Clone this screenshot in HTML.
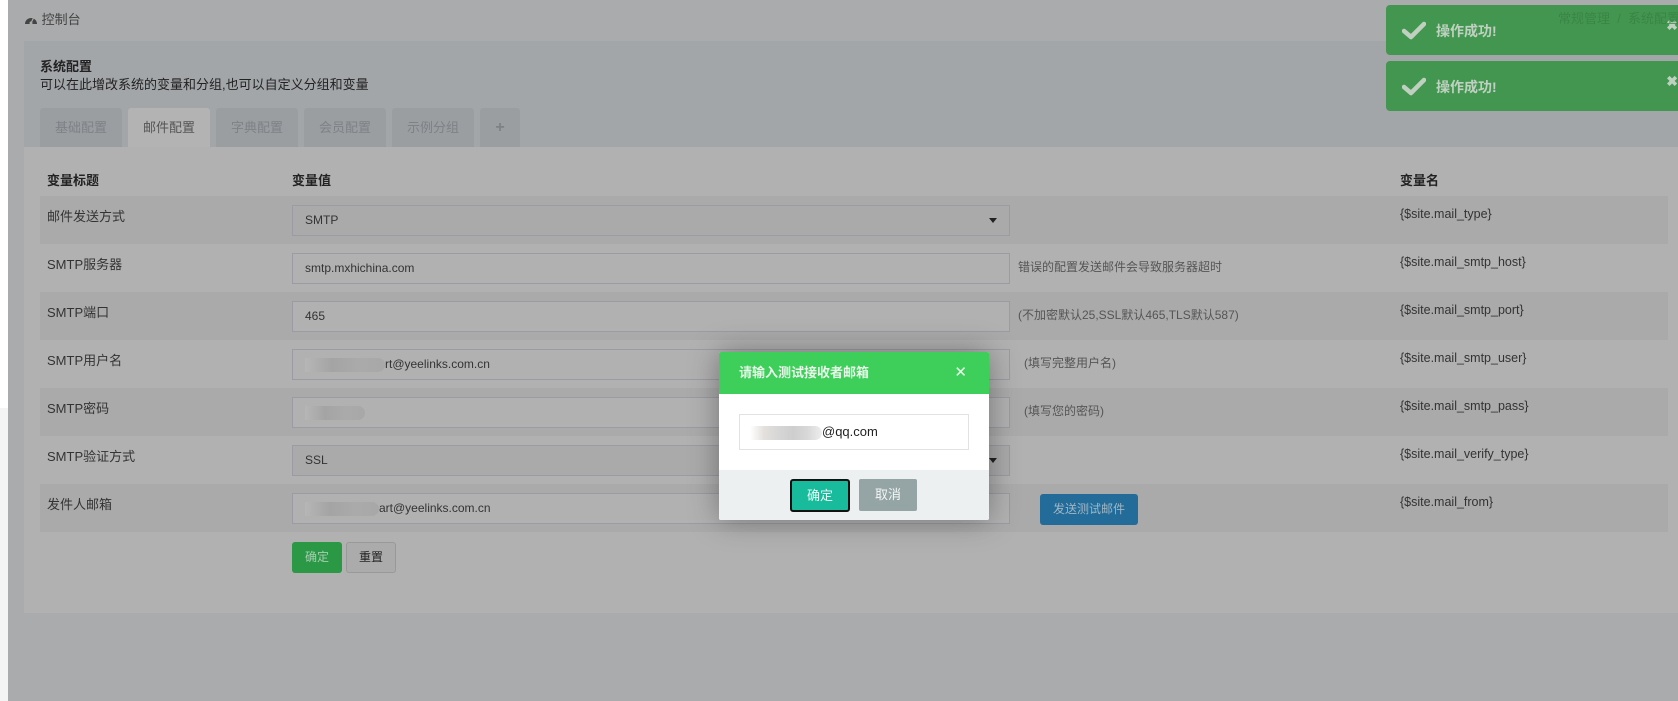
<!DOCTYPE html>
<html><head><meta charset="utf-8"><style>
*{box-sizing:border-box;margin:0;padding:0}
body{width:1678px;height:701px;overflow:hidden;background:#aaabad;font-family:"Liberation Sans","Noto Sans CJK SC",sans-serif;font-size:13px;color:#333;position:relative}
.abs{position:absolute}
.strip{left:0;top:0;width:8px;height:408px;background:#fff}
.strip2{left:0;top:408px;width:8px;height:293px;background:#f4f4f4}
.panel{left:24px;top:41px;width:1654px;height:572px;background:#a3a6a9}
.body{left:24px;top:147px;width:1654px;height:466px;background:#b1b1b1}
.tab{top:108px;height:39px;width:82px;background:#9a9ea1;color:#7e8286;text-align:center;line-height:39px;font-size:13px;border-radius:3px 3px 0 0}
.tab.on{background:#b3b3b3;color:#555}
.row{left:40px;width:1628px;height:48px}
.row.s{background:#aaaaaa}
.lbl{left:47px;font-size:13px;color:#333}
.inp{left:292px;width:718px;height:31px;border:1px solid #9b9ba3;background:#b1b1b1;padding-left:12px;line-height:29px;font-size:12px;color:#333}
.sel{background:#aaaaaa}
.help{left:1018px;font-size:12px;color:#555}
.var{left:1400px;font-size:12.5px;color:#333}
.toast{left:1386px;width:292px;height:50px;background:#43964f;border-radius:4px 0 0 4px;color:#bfd1c0;font-size:14px;font-weight:bold}
.blur{background:linear-gradient(90deg,#b6b6b6,#a4a4a4,#aaa,#a8a8a8);height:14px;border-radius:0 7px 7px 0}
</style></head><body>
<div class="abs strip"></div><div class="abs strip2"></div>
<div class="abs" style="left:24px;top:9px;color:#444;font-size:13px">
<svg width="14" height="11" viewBox="0 0 14 11" style="vertical-align:-1px"><path d="M1 10 A6 6 0 0 1 13 10 Z" fill="#444"/><circle cx="7" cy="9" r="1.5" fill="#aaa"/><path d="M7 9 L9.5 4" stroke="#aaa" stroke-width="1.2"/></svg> 控制台</div>
<div class="abs panel"></div>
<div class="abs" style="left:40px;top:56px;font-weight:bold;color:#222">系统配置</div>
<div class="abs" style="left:40px;top:74px;color:#222">可以在此增改系统的变量和分组,也可以自定义分组和变量</div>
<div class="abs tab" style="left:40px">基础配置</div>
<div class="abs tab on" style="left:128px">邮件配置</div>
<div class="abs tab" style="left:216px">字典配置</div>
<div class="abs tab" style="left:304px">会员配置</div>
<div class="abs tab" style="left:392px">示例分组</div>
<div class="abs tab" style="left:480px;width:40px;font-weight:bold;font-size:16px">+</div>
<div class="abs body"></div>
<div class="abs" style="left:47px;top:170px;font-weight:bold;color:#222">变量标题</div>
<div class="abs" style="left:292px;top:170px;font-weight:bold;color:#222">变量值</div>
<div class="abs" style="left:1400px;top:170px;font-weight:bold;color:#222">变量名</div>

<div class="abs row s" style="top:196px"></div>
<div class="abs row" style="top:244px"></div>
<div class="abs row s" style="top:292px"></div>
<div class="abs row" style="top:340px"></div>
<div class="abs row s" style="top:388px"></div>
<div class="abs row" style="top:436px"></div>
<div class="abs row s" style="top:484px"></div>

<div class="abs lbl" style="top:206px">邮件发送方式</div>
<div class="abs lbl" style="top:254px">SMTP服务器</div>
<div class="abs lbl" style="top:302px">SMTP端口</div>
<div class="abs lbl" style="top:350px">SMTP用户名</div>
<div class="abs lbl" style="top:398px">SMTP密码</div>
<div class="abs lbl" style="top:446px">SMTP验证方式</div>
<div class="abs lbl" style="top:494px">发件人邮箱</div>

<div class="abs inp sel" style="top:205px">SMTP<span style="position:absolute;right:12px;top:12px;border:4px solid transparent;border-top:5px solid #222;"></span></div>
<div class="abs inp" style="top:253px">smtp.mxhichina.com</div>
<div class="abs inp" style="top:301px">465</div>
<div class="abs inp" style="top:349px"><span style="display:inline-block;width:80px;vertical-align:middle" class="blur"></span>rt@yeelinks.com.cn</div>
<div class="abs inp" style="top:397px"><span style="display:inline-block;width:60px;vertical-align:middle" class="blur"></span></div>
<div class="abs inp sel" style="top:445px">SSL<span style="position:absolute;right:12px;top:12px;border:4px solid transparent;border-top:5px solid #222;"></span></div>
<div class="abs inp" style="top:493px"><span style="display:inline-block;width:74px;vertical-align:middle" class="blur"></span>art@yeelinks.com.cn</div>

<div class="abs help" style="top:258px">错误的配置发送邮件会导致服务器超时</div>
<div class="abs help" style="top:306px">(不加密默认25,SSL默认465,TLS默认587)</div>
<div class="abs help" style="top:354px;left:1024px">(填写完整用户名)</div>
<div class="abs help" style="top:402px;left:1024px">(填写您的密码)</div>
<div class="abs" style="left:1040px;top:494px;width:98px;height:31px;background:#236c99;border-radius:3px;color:#9fb6c5;text-align:center;line-height:31px;font-size:12px">发送测试邮件</div>

<div class="abs var" style="top:207px">{$site.mail_type}</div>
<div class="abs var" style="top:255px">{$site.mail_smtp_host}</div>
<div class="abs var" style="top:303px">{$site.mail_smtp_port}</div>
<div class="abs var" style="top:351px">{$site.mail_smtp_user}</div>
<div class="abs var" style="top:399px">{$site.mail_smtp_pass}</div>
<div class="abs var" style="top:447px">{$site.mail_verify_type}</div>
<div class="abs var" style="top:495px">{$site.mail_from}</div>

<div class="abs" style="left:292px;top:542px;width:50px;height:31px;background:#2a9845;border-radius:3px;color:#a8cdb2;text-align:center;line-height:31px;font-size:12px">确定</div>
<div class="abs" style="left:346px;top:542px;width:50px;height:31px;background:#ababab;border:1px solid #999;border-radius:3px;color:#222;text-align:center;line-height:29px;font-size:12px">重置</div>

<div class="abs toast" style="top:5px"><svg class="abs" style="left:16px;top:16px" width="24" height="19" viewBox="0 0 24 19"><path d="M2 10 L9 16 L22 3" stroke="#bfcfc0" stroke-width="4.5" fill="none" stroke-linecap="round" stroke-linejoin="round"/></svg><span class="abs" style="left:50px;top:16px">操作成功!</span><span class="abs" style="right:0;top:12px;font-size:14px">✖</span></div>
<div class="abs toast" style="top:61px"><svg class="abs" style="left:16px;top:16px" width="24" height="19" viewBox="0 0 24 19"><path d="M2 10 L9 16 L22 3" stroke="#bfcfc0" stroke-width="4.5" fill="none" stroke-linecap="round" stroke-linejoin="round"/></svg><span class="abs" style="left:50px;top:16px">操作成功!</span><span class="abs" style="right:0;top:12px;font-size:14px">✖</span></div>
<div class="abs" style="left:1558px;top:8px;color:#3a8546;font-size:13px;white-space:nowrap">常规管理 &nbsp;/&nbsp; 系统配置</div>

<div class="abs" style="left:719px;top:352px;width:270px;height:168px;box-shadow:0 0 30px rgba(0,0,0,0.35);background:#fff;border-radius:2px;overflow:hidden">
<div style="height:42px;background:#3ecf5a;color:#eaf8ec;font-weight:bold;font-size:13px;line-height:42px;padding-left:20px;position:relative">请输入测试接收者邮箱<span style="position:absolute;right:22px;top:0;font-weight:normal;font-size:15px">✕</span></div>
<div style="position:absolute;left:20px;top:62px;width:230px;height:36px;border:1px solid #e2e2e2;padding-left:10px;line-height:34px;font-size:13px;color:#222"><span style="display:inline-block;width:72px;height:14px;vertical-align:middle;background:linear-gradient(90deg,#fff,#e3e0dc,#d6d6d6,#cecece,#d8d8d8,#eee);border-radius:0 7px 7px 0"></span>@qq.com</div>
<div style="position:absolute;left:0;top:118px;width:270px;height:50px;background:#edf0f1"></div>
<div style="position:absolute;left:71px;top:127px;width:60px;height:33px;background:#18bc9c;border:2px solid #111;border-radius:3px;color:#e8fbf6;text-align:center;line-height:29px;font-size:13px">确定</div>
<div style="position:absolute;left:140px;top:127px;width:58px;height:32px;background:#95a5a6;border-radius:2px;color:#f3f6f6;text-align:center;line-height:32px;font-size:13px">取消</div>
</div>
</body></html>
